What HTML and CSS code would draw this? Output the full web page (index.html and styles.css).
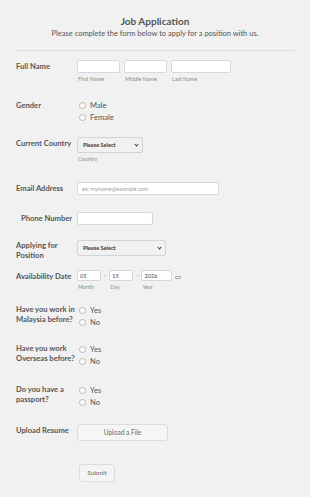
FILE: index.html
```html
<!DOCTYPE html>
<html>
<head>
<meta charset="utf-8">
<link rel="stylesheet" href="styles.css">
</head>
<body>
<div class="form">
  <header class="head">
    <h1 class="title">Job Application</h1>
    <p class="subtitle">Please complete the form below to apply for a position with us.</p>
  </header>

  <div class="row r-name">
    <div class="label">Full Name</div>
    <div class="field names">
      <div class="sub"><span class="input w43"></span><span class="sublabel">First Name</span></div>
      <div class="sub"><span class="input w43"></span><span class="sublabel">Middle Name</span></div>
      <div class="sub"><span class="input w60"></span><span class="sublabel">Last Name</span></div>
    </div>
  </div>

  <div class="row r-gender">
    <div class="label lbl-radio">Gender</div>
    <div class="field radios">
      <div class="opt"><span class="radio"></span>Male</div>
      <div class="opt"><span class="radio"></span>Female</div>
    </div>
  </div>

  <div class="row r-country">
    <div class="label lbl-select">Current Country</div>
    <div class="field">
      <div class="select w66">Please Select<span class="chev"></span></div>
      <span class="sublabel">Country</span>
    </div>
  </div>

  <div class="row r-email">
    <div class="label">Email Address</div>
    <div class="field"><span class="input w142 ph">ex: myname@example.com</span></div>
  </div>

  <div class="row r-phone">
    <div class="label indent">Phone Number</div>
    <div class="field"><span class="input w76"></span></div>
  </div>

  <div class="row r-apply">
    <div class="label two">Applying for Position</div>
    <div class="field"><div class="select w89">Please Select<span class="chev"></span></div></div>
  </div>

  <div class="row r-date">
    <div class="label">Availability Date</div>
    <div class="field date">
      <div class="sub"><span class="dinput w24">05</span><span class="sublabel">Month</span></div>
      <span class="dash">-</span>
      <div class="sub"><span class="dinput w24">15</span><span class="sublabel">Day</span></div>
      <span class="dash">-</span>
      <div class="sub"><span class="dinput w31">2026</span><span class="sublabel">Year</span></div>
      <span class="cal"></span>
    </div>
  </div>

  <div class="row r-q1">
    <div class="label two">Have you work in Malaysia before?</div>
    <div class="field radios">
      <div class="opt"><span class="radio"></span>Yes</div>
      <div class="opt"><span class="radio"></span>No</div>
    </div>
  </div>

  <div class="row r-q2">
    <div class="label two">Have you work Overseas before?</div>
    <div class="field radios">
      <div class="opt"><span class="radio"></span>Yes</div>
      <div class="opt"><span class="radio"></span>No</div>
    </div>
  </div>

  <div class="row r-q3">
    <div class="label two">Do you have a passport?</div>
    <div class="field radios">
      <div class="opt"><span class="radio"></span>Yes</div>
      <div class="opt"><span class="radio"></span>No</div>
    </div>
  </div>

  <div class="row r-upload">
    <div class="label">Upload Resume</div>
    <div class="field"><span class="upload">Upload a File</span></div>
  </div>

  <div class="row r-submit">
    <span class="submit">Submit</span>
  </div>
</div>
</body>
</html>
```

FILE: styles.css
```css
html, body {
  margin: 0;
  padding: 0;
  background: #f1f1f1;
}
body {
  font-family: Lato, "Open Sans", sans-serif;
  color: #555;
  width: 310px;
  height: 497px;
  overflow: hidden;
}
.form {
  padding: 0 15px;
}
.head {
  text-align: center;
  padding-top: 15px;
  padding-bottom: 11px;
  border-bottom: 1px solid #dedede;
}
.title {
  margin: 0;
  font-size: 10px;
  line-height: 13px;
  font-weight: 700;
  color: #555;
}
.subtitle {
  margin: 0;
  font-size: 7.5px;
  line-height: 11px;
  color: #555;
}
.row {
  display: flex;
  align-items: flex-start;
  padding-left: 1px;
}
.label {
  width: 61px;
  flex: none;
  font-size: 7.6px;
  font-weight: 700;
  line-height: 11px;
  color: #555;
  padding-top: 1px;
}
.label.indent { padding-left: 5px; width: 56px; }
.label.two { line-height: 10px; padding-top: 0; }
.field { display: flex; flex-direction: column; }
.names, .date { flex-direction: row; }
.sub { display: flex; flex-direction: column; margin-right: 4px; }
.input {
  display: block;
  box-sizing: border-box;
  height: 13px;
  background: #fff;
  border: 1px solid #d8d8d8;
  border-radius: 2px;
}
.input.ph {
  font-size: 5.6px;
  line-height: 11px;
  color: #a0a0a0;
  padding-left: 4px;
}
.w43 { width: 43px; }
.w60 { width: 60px; }
.w142 { width: 142px; }
.w76 { width: 76px; }
.w66 { width: 66px; }
.w89 { width: 89px; }
.w24 { width: 24px; }
.w31 { width: 31px; }
.sublabel {
  font-size: 5.4px;
  line-height: 8px;
  color: #8a8a8a;
  padding-left: 1px;
  margin-top: 2px;
}
.radios { padding-top: 0; }
.opt {
  display: flex;
  align-items: center;
  font-size: 7.6px;
  line-height: 12px;
  color: #555;
  margin-left: 2px;
}
.radio {
  width: 7px;
  height: 7px;
  box-sizing: border-box;
  border: 1px solid #b5b5b5;
  border-radius: 50%;
  background: #fff;
  margin-right: 4px;
}
.select {
  position: relative;
  box-sizing: border-box;
  height: 16px;
  border: 1px solid #d3d3d3;
  border-radius: 2px;
  background: #f1f1f1;
  font-size: 5.6px;
  font-weight: 700;
  color: #333;
  line-height: 14px;
  padding-left: 5px;
}
.chev {
  position: absolute;
  right: 4px;
  top: 5px;
  width: 2px;
  height: 2px;
  border-right: 1px solid #444;
  border-bottom: 1px solid #444;
  transform: rotate(45deg);
}
.date .sub { margin-right: 3px; }
.dinput {
  display: block;
  box-sizing: border-box;
  height: 11px;
  background: #fff;
  border: 1px solid #d8d8d8;
  border-radius: 2px;
  font-size: 5.6px;
  line-height: 9px;
  color: #444;
  padding-left: 2px;
}
.dash {
  font-size: 6px;
  line-height: 10px;
  color: #666;
  margin-right: 3px;
}
.cal {
  width: 6px;
  height: 3px;
  box-sizing: border-box;
  border: 1px solid #aaa;
  border-radius: 1px;
  margin-top: 6px;
}
.upload {
  display: block;
  box-sizing: border-box;
  width: 91px;
  height: 17px;
  border: 1px solid #dcdcdc;
  border-radius: 3px;
  background: #f6f6f6;
  font-size: 6.6px;
  line-height: 15px;
  text-align: center;
  color: #6a6a6a;
}
.submit {
  display: block;
  box-sizing: border-box;
  width: 36px;
  height: 18px;
  border: 1px solid #dcdcdc;
  border-radius: 3px;
  background: #f4f4f4;
  font-size: 6.4px;
  line-height: 16px;
  text-align: center;
  color: #6a6a6a;
  margin-left: 63px;
}
.r-name { margin-top: 9px; }
.r-gender { margin-top: 16px; }
.r-country { margin-top: 14px; }
.r-email { margin-top: 19px; }
.r-phone { margin-top: 17px; }
.r-apply { margin-top: 15px; }
.r-date { margin-top: 10px; }
.r-q1 { margin-top: 13px; }
.r-q2 { margin-top: 15px; }
.r-q3 { margin-top: 17px; }
.r-upload { margin-top: 16px; }
.r-submit { margin-top: 23px; }
```
